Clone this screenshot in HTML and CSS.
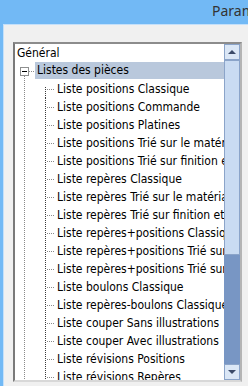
FILE: index.html
```html
<!DOCTYPE html>
<html lang="fr">
<head>
    <meta charset="UTF-8">
    <meta name="viewport" content="width=device-width, initial-scale=1.0">
    <title>Paramètres</title>
    <link rel="stylesheet" href="styles.css">
</head>
<body>
    <div class="fenetre">
        <div class="barre-titre">
            <span class="titre">Paramètres</span>
        </div>
        <div class="client">
            <div class="liste">
                <div class="arbre">
                    <div class="ligne racine"><span class="libelle">Général</span></div>
                    <div class="ligne parent">
                        <span class="bascule"><span class="boite"></span></span>
                        <span class="libelle selection">Listes des pièces</span>
                    </div>
                    <div class="ligne enfant premier"><span class="retrait"></span><span class="libelle">Liste positions Classique</span></div>
                    <div class="ligne enfant"><span class="retrait"></span><span class="libelle">Liste positions Commande</span></div>
                    <div class="ligne enfant"><span class="retrait"></span><span class="libelle">Liste positions Platines</span></div>
                    <div class="ligne enfant"><span class="retrait"></span><span class="libelle">Liste positions Trié sur le matériau</span></div>
                    <div class="ligne enfant"><span class="retrait"></span><span class="libelle">Liste positions Trié sur finition et matériau</span></div>
                    <div class="ligne enfant"><span class="retrait"></span><span class="libelle">Liste repères Classique</span></div>
                    <div class="ligne enfant"><span class="retrait"></span><span class="libelle">Liste repères Trié sur le matériau</span></div>
                    <div class="ligne enfant"><span class="retrait"></span><span class="libelle">Liste repères Trié sur finition et matériau</span></div>
                    <div class="ligne enfant"><span class="retrait"></span><span class="libelle">Liste repères+positions Classique</span></div>
                    <div class="ligne enfant"><span class="retrait"></span><span class="libelle">Liste repères+positions Trié sur le matériau</span></div>
                    <div class="ligne enfant"><span class="retrait"></span><span class="libelle">Liste repères+positions Trié sur finition</span></div>
                    <div class="ligne enfant"><span class="retrait"></span><span class="libelle">Liste boulons Classique</span></div>
                    <div class="ligne enfant"><span class="retrait"></span><span class="libelle">Liste repères-boulons Classique</span></div>
                    <div class="ligne enfant"><span class="retrait"></span><span class="libelle">Liste couper Sans illustrations</span></div>
                    <div class="ligne enfant"><span class="retrait"></span><span class="libelle">Liste couper Avec illustrations</span></div>
                    <div class="ligne enfant"><span class="retrait"></span><span class="libelle">Liste révisions Positions</span></div>
                    <div class="ligne enfant"><span class="retrait"></span><span class="libelle">Liste révisions Repères</span></div>
                </div>
                <div class="defilement">
                    <div class="bouton haut"></div>
                    <div class="curseur"></div>
                    <div class="piste"></div>
                    <div class="bouton bas"></div>
                </div>
            </div>
        </div>
    </div>
</body>
</html>
```
FILE: styles.css
```css
html, body {
    margin: 0;
    padding: 0;
    height: 100%;
    overflow: hidden;
}

body {
    background-color: #72b9f5;
}

.fenetre {
    height: 100%;
    display: flex;
    flex-direction: column;
}

.barre-titre {
    height: 24px;
    padding-left: 212px;
    white-space: nowrap;
    overflow: hidden;
}

.titre {
    font-family: "Noto Sans", sans-serif;
    font-size: 14px;
    line-height: 22px;
    color: #333;
}

.client {
    flex: 1;
    margin-left: 3px;
    background-color: #f0f0f0;
    border-top: 1px solid #c4e0fa;
    border-left: 1px solid #c4e0fa;
    padding: 17px 0 0 9px;
}

.liste {
    width: 229px;
    height: 340px;
    box-sizing: border-box;
    display: flex;
    background-color: #fff;
    border-top: 2px solid #8c8c8c;
    border-left: 2px solid #7a7a7a;
    border-right: 2px solid #b4b4b4;
    border-bottom: 2px solid #d8d8d8;
}

.arbre {
    width: 209px;
    overflow: hidden;
    font-family: "DejaVu Sans Condensed", "DejaVu Sans", sans-serif;
    font-stretch: condensed;
    font-size: 12px;
    color: #000;
}

.ligne {
    height: 18px;
    display: flex;
    align-items: center;
    white-space: nowrap;
}

.libelle {
    line-height: 17px;
}

.racine {
    padding-left: 2px;
}

.bascule {
    width: 20px;
    height: 18px;
    flex: none;
    background-image:
        repeating-linear-gradient(to bottom, #8a8a8a 0 1px, transparent 1px 2px),
        repeating-linear-gradient(to right, #8a8a8a 0 1px, transparent 1px 2px);
    background-repeat: no-repeat;
    background-position: 9px 14px, 14px 9px;
    background-size: 1px 4px, 5px 1px;
}

.boite {
    display: block;
    width: 9px;
    height: 9px;
    box-sizing: border-box;
    margin: 5px 0 0 5px;
    border: 1px solid #8e8f8f;
    background: #fff linear-gradient(#000, #000) no-repeat 1px 3px / 5px 1px;
}

.selection {
    flex: 1;
    height: 17px;
    align-self: flex-start;
    padding-left: 2px;
    background-color: #b9c8dc;
}

.retrait {
    width: 42px;
    height: 18px;
    flex: none;
    background-image:
        repeating-linear-gradient(to bottom, #8a8a8a 0 1px, transparent 1px 2px),
        repeating-linear-gradient(to bottom, #3a3a3a 0 1px, transparent 1px 2px),
        repeating-linear-gradient(to right, #8a8a8a 0 1px, transparent 1px 2px);
    background-repeat: no-repeat;
    background-position: 9px 0, 30px 0, 32px 9px;
    background-size: 1px 18px, 1px 18px, 8px 1px;
}

.premier .retrait {
    background-position: 9px 0, 30px 7px, 32px 9px;
}

.defilement {
    width: 16px;
    display: flex;
    flex-direction: column;
    background-color: #7896c4;
}

.bouton {
    height: 16px;
    box-sizing: border-box;
    border: 1px solid #8ba4c9;
    background-color: #dbe7f6;
    display: flex;
    align-items: center;
    justify-content: center;
}

.bouton::before {
    content: "";
    width: 0;
    height: 0;
    border-left: 4px solid transparent;
    border-right: 4px solid transparent;
}

.haut::before {
    border-bottom: 4px solid #3b4a68;
}

.bas::before {
    border-top: 4px solid #3b4a68;
}

.curseur {
    height: 195px;
    box-sizing: border-box;
    border: 1px solid #8ba4c9;
    background-color: #c9dbf2;
}

.piste {
    flex: 1;
}
```
